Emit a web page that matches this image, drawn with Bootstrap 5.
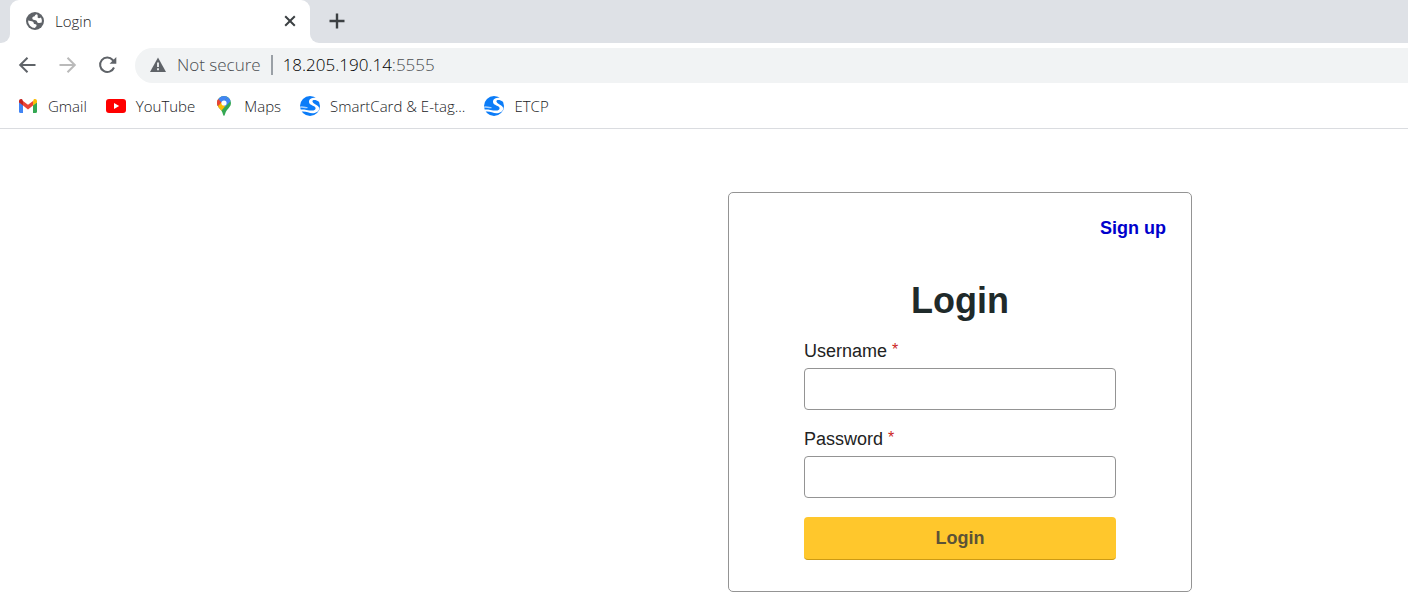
<!DOCTYPE html>
<html lang="en">
<head>
<meta charset="utf-8">
<meta name="viewport" content="width=device-width, initial-scale=1">
<title>Login</title>
<link rel="stylesheet" href="https://cdn.jsdelivr.net/npm/bootstrap@5.3.0/dist/css/bootstrap.min.css">
<style>
  body { font-family: "Liberation Sans", Arial, sans-serif; font-size: 18px; line-height: 24px; color: #222; background: #fff; }
  svg { display: block; flex: none; }
  .chrome { font-family: "Segoe UI", "Open Sans", sans-serif; font-weight: 330; font-size: 15px; line-height: 20px; color: #202124; }
  .chrome button { border: 0; background: none; padding: 0; color: #5f6368; }
  .tab-strip { background: #dee1e6; height: 43px; }
  .strip-edge { width: 10px; height: 43px; background: #fff; }
  .strip-edge::before { content: ""; display: block; height: 100%; background: #dee1e6; border-bottom-right-radius: 9px; }
  .strip-rest { background: #fff; }
  .strip-rest > div { background: #dee1e6; height: 43px; border-bottom-left-radius: 9px; padding: 0 0 1px 18px; }
  .active-tab { width: 300px; height: 43px; background: #fff; border-radius: 9px 9px 0 0; padding: 0 12px 1px 16px; gap: 11px; }
  .toolbar { height: 45px; padding: 0 0 1px 17px; gap: 20px; }
  .omnibox { height: 35px; background: #f1f3f4; border-radius: 18px 0 0 18px; font-size: 17px; padding-left: 14px; margin-left: -2px; color: #4a4d51; gap: 10px; }
  .divider { width: 2px; height: 20px; background: #9aa0a6; }
  .host { color: #000; }
  .bookmarks { height: 41px; padding: 0 18px 5px; gap: 19px; border-bottom: 1px solid #dadce0; }
  .bookmarks a { color: #202124; text-decoration: none; gap: 10px; }
  .page { padding: 63px 216px 23px 16px; }
  .login-box { width: 464px; border: 1px solid #949494; border-radius: 5px; padding: 23px 25px 31px; }
  .signup { color: #0000cc; font-weight: 700; text-decoration: none; }
  .login-form { padding: 0 50px; }
  h1 { font-size: 36px; line-height: 44px; font-weight: 700; color: #1f2a2a; margin: 39px 0 16px; }
  .req { color: #cc1f1f; font-size: 16px; line-height: 18px; }
  .login-form label { display: block; margin-bottom: 5px; }
  .login-form .form-control { height: 42px; border: 1px solid #949494; border-radius: 4px; margin-bottom: 17px; }
  .btn-login { height: 43px; background: #ffc72c; color: #5c5237; font-size: 18px; font-weight: 700; border: 0; border-bottom: 1px solid #cc9a14; border-radius: 4px; margin-top: 2px; padding: 0; }
  .btn-login:hover { background: #f5bd20; }
  @media (max-width: 900px) { .page { padding-right: 16px; } .login-box { width: 100%; } .login-form { padding: 0; } }
</style>
</head>
<body>
<header class="chrome">
  <div class="tab-strip d-flex">
    <div class="strip-edge"></div>
    <div class="active-tab d-flex align-items-center">
      <svg width="18" height="18" viewBox="0 0 18 18"><circle cx="9" cy="9" r="9" fill="#5f6368"/><path d="M11 2.200C8.500 2.600 9.500 4.200 7.700 4.600 6.300 4.900 6 6.300 6.600 7.300 7.400 8.500 9.500 7.600 10.600 8.800c.8 1 .4 2 2 2.200 1.300.2 2-.2 3.100-.5A6.900 6.900 0 0 0 15 5.600c-1.200.5-2.300.9-3 .2C11 4.900 12.600 4 11 2.200z" fill="#fff"/><path d="M2.100 8.400C3.500 9 5.500 8.500 7 9.800c1.200 1 .3 1.900 1.500 2.300 1.500.4 2.300.5 2 1.900-.2.800-1.200.8-1.400 2A7 7 0 0 1 2.100 8.400z" fill="#fff"/></svg>
      <span class="flex-grow-1">Login</span>
      <button type="button" aria-label="Close tab"><svg width="16" height="16" viewBox="0 0 16 16" stroke="#3c4043" stroke-width="2"><path d="M3.200 3.200l9.600 9.600M12.800 3.200l-9.600 9.600"/></svg></button>
    </div>
    <div class="strip-rest flex-grow-1"><div class="d-flex align-items-center">
      <button type="button" aria-label="New tab"><svg width="18" height="18" viewBox="0 0 18 18" stroke="#3c4043" stroke-width="2.400"><path d="M9 1.500v15M1.500 9h15"/></svg></button>
    </div></div>
  </div>
  <div class="toolbar d-flex align-items-center">
    <button type="button" aria-label="Back"><svg width="20" height="20" viewBox="0 0 20 20" fill="none" stroke="#5f6368" stroke-width="2"><path d="M18.500 10H3.500M10.500 2.700L3.200 10l7.300 7.300"/></svg></button>
    <button type="button" aria-label="Forward"><svg width="20" height="20" viewBox="0 0 20 20" fill="none" stroke="#bababa" stroke-width="2"><path d="M2.500 10h15M10.500 2.700l7.300 7.300-7.300 7.300"/></svg></button>
    <button type="button" aria-label="Reload"><svg width="20" height="20" viewBox="0 0 20 20"><path d="M17 12.500A7.200 7.200 0 1 1 15.700 5L17 6.300" fill="none" stroke="#5f6368" stroke-width="2"/><path d="M19.300 2v6.700h-6.700z" fill="#5f6368"/></svg></button>
    <div class="omnibox d-flex align-items-center flex-grow-1">
      <svg width="18" height="18" viewBox="0 0 18 18"><path d="M9 1.500L17 16H1z" fill="#5f6368"/><path d="M9 6.500v4.500M9 12.300v2" stroke="#f1f3f4" stroke-width="1.800"/></svg>
      <span>Not secure</span>
      <span class="divider"></span>
      <span><span class="host">18.205.190.14</span>:5555</span>
    </div>
  </div>
  <nav class="bookmarks d-flex align-items-center" aria-label="Bookmarks">
    <a href="#" class="d-flex align-items-center"><svg width="20" height="20" viewBox="0 0 20 20"><path d="M1 6v9.500q0 1.500 1.500 1.500H5V9z" fill="#4285f4"/><path d="M15 9v8h2.500q1.500 0 1.500-1.500V6z" fill="#34a853"/><path d="M15 5.200V9.500l4-3V5c0-2-2-2.600-3.300-1.600z" fill="#fbbc04"/><path d="M5 9.500V5l5 3.800L15 5v4.600l-5 3.800z" fill="#ea4335"/><path d="M1 5v1.500l4 3V4.900L4.300 3.400C3 2.400 1 3 1 5z" fill="#c5221f"/></svg>Gmail</a>
    <a href="#" class="d-flex align-items-center"><svg width="20" height="20" viewBox="0 0 20 20"><rect y="3" width="20" height="14" rx="3" fill="#f00"/><path d="M8 7v6l5.200-3z" fill="#fff"/></svg>YouTube</a>
    <a href="#" class="d-flex align-items-center"><svg width="20" height="20" viewBox="0 0 20 20"><defs><clipPath id="pin"><path d="M10 0a7 7 0 0 0-7 7c0 3.200 2.200 4.800 4 7 1.800 2.300 2 5.800 3 5.800s1.200-3.500 3-5.800c1.800-2.200 4-3.800 4-7a7 7 0 0 0-7-7z"/></clipPath></defs><g clip-path="url(#pin)"><path d="M0 0h20v20H0z" fill="#34a853"/><path d="M5 3.200l5 3.800-6.500 7.500L0 9V3z" fill="#ea4335"/><path d="M3 11.300l7-8 3 5-7 8z" fill="#fbbc04"/><path d="M3 1.800L7.500 5.500 4.800 9 1 5z" fill="#ea4335"/><path d="M4.200 3L8 7l6.500-6.500L9-2z" fill="#4285f4"/><path d="M14.500.5L16.800 5 11 11 9 6z" fill="#4285f4"/></g><circle cx="10" cy="7" r="2.600" fill="#fff"/></svg>Maps</a>
    <a href="#" class="d-flex align-items-center"><svg width="20" height="20" viewBox="0 0 20 20"><defs><symbol id="wave" viewBox="0 0 20 20"><circle cx="10" cy="10" r="10" fill="#0b7cf8"/><path d="M18.800 2.500C15 1 8.800 1.700 9 6 9.200 9.800 15.500 9.300 15.600 12.300 15.700 15.600 10 14.600 6.500 13.900 4 13.400 2 13.400 0 13.500L1.200 15.700C6 14.800 9 17.600 13.500 17.200 17 16.900 19.500 14.500 19.200 12 18.800 9 12.300 7.600 12.400 5.200 12.500 3.400 16.500 3.600 18.800 5.800z" fill="#fff"/><path d="M0 11.300c2.500-1 4 .7 7.500.3" fill="none" stroke="#a9d2fd" stroke-width="1.400"/></symbol></defs><use href="#wave"/></svg>SmartCard &amp; E-tag...</a>
    <a href="#" class="d-flex align-items-center"><svg width="20" height="20" viewBox="0 0 20 20"><use href="#wave"/></svg>ETCP</a>
  </nav>
</header>
<main class="page d-flex justify-content-end">
  <section class="login-box">
    <div class="text-end"><a class="signup" href="#">Sign up</a></div>
    <form class="login-form">
      <h1 class="text-center">Login</h1>
      <label for="username">Username <span class="req align-text-top">*</span></label>
      <input class="form-control" type="text" id="username" required>
      <label for="password">Password <span class="req align-text-top">*</span></label>
      <input class="form-control" type="password" id="password" required>
      <button type="submit" class="btn btn-login w-100">Login</button>
    </form>
  </section>
</main>
<script src="https://cdn.jsdelivr.net/npm/bootstrap@5.3.0/dist/js/bootstrap.bundle.min.js"></script>
</body>
</html>
